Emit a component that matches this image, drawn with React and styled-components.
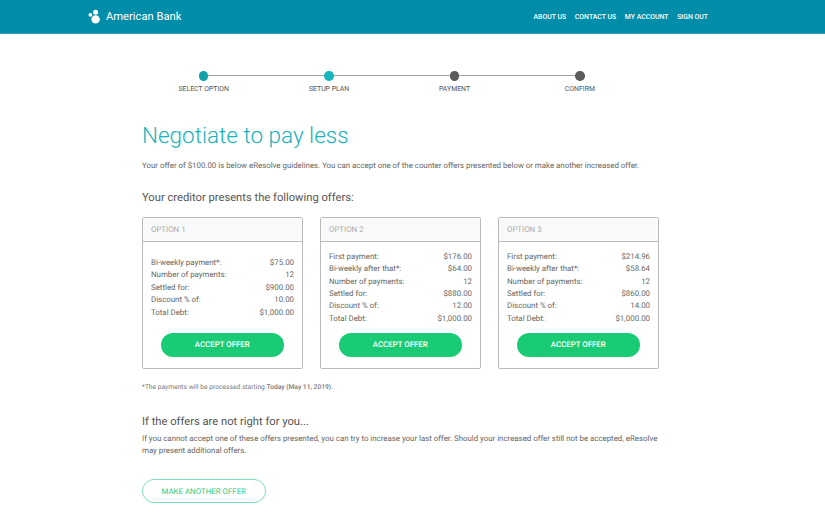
import React from 'react';
import styled, { createGlobalStyle } from 'styled-components';

const Global = createGlobalStyle`
  html, body { margin: 0; padding: 0; background: #fff; }
  body {
    font-family: Roboto, "Liberation Sans", sans-serif; color: #666; overflow: hidden;
    text-rendering: geometricPrecision; -webkit-font-smoothing: antialiased;
  }
`;
const Header = styled.header`
  height: 33px; background: #008da9; border-bottom: 1px solid #2f9fb5;
  display: flex; align-items: center; justify-content: space-between;
  padding: 0 117px 0 88px;
`;
const Brand = styled.div`display: flex; align-items: center; gap: 5px; color: #fff; font-size: 11.2px;`;
const Nav = styled.nav`display: flex; gap: 8.7px;`;
const NavLink = styled.a`color: #fff; font-size: 6.9px; font-weight: 500; white-space: nowrap;`;
const Main = styled.main`width: 517px; margin-left: 142px; display: flex; flex-direction: column;`;
const Stepper = styled.div`
  position: relative; display: grid; grid-template-columns: repeat(4, 125.4px);
  margin: 37px 0 0 -1px;
  width: 501.6px;
`;
const Line = styled.div`position: absolute; top: 4px; left: 62px; width: 377px; height: 1.4px; background: #a0a0a0;`;
const Step = styled.div`display: flex; flex-direction: column; align-items: center; gap: 4px; position: relative;`;
const Dot = styled.span`width: 9.5px; height: 9.5px; border-radius: 50%; background: ${p => p.$c};`;
const StepLabel = styled.span`font-size: 6.9px; color: #555; line-height: 9px; white-space: nowrap;`;
const Title = styled.h1`margin: 27.5px 0 0; font-size: 22.5px; line-height: 30px; font-weight: 300; color: #1ab2ba;`;
const Intro = styled.p`margin: 9px 0 0; font-size: 7.87px; line-height: 12px; color: #666; white-space: nowrap;`;
const Sub = styled.h2`margin: 17.5px 0 0; font-size: 11.2px; line-height: 16px; font-weight: 400; color: #555;`;
const Cards = styled.div`display: flex; gap: 17px; margin-top: 11px;`;
const Card = styled.section`
  width: 161px; height: 152px; box-sizing: border-box; border: 1px solid #bbb; border-radius: 2px;
  display: flex; flex-direction: column;
`;
const CardHead = styled.div`
  height: 24px; flex: none; box-sizing: border-box; background: #f9f9f9; border-bottom: 1px solid #bbb;
  padding: 0 8px; display: flex; align-items: center; font-size: 7.87px; color: #aaa;
`;
const CardBody = styled.div`flex: 1; padding: 2px 8px 0; display: flex; flex-direction: column; justify-content: center;`;
const Row = styled.div`display: flex; justify-content: space-between; font-size: 7.87px; line-height: 12.4px; color: #666;`;
const CardFoot = styled.div`padding: 0 0.5px 11px 0; display: flex; justify-content: center;`;
const Accept = styled.button`
  width: 123.5px; height: 24px; border: none; border-radius: 12px; background: #1acb76; color: #fff;
  font: 500 7.87px Roboto, sans-serif; padding: 0; text-rendering: geometricPrecision;
`;
const Note = styled.p`margin: 13px 0 0; font-size: 6.7px; line-height: 10px; color: #777; b { font-weight: 500; }`;
const Sub2 = styled(Sub)`margin-top: 22px;`;
const Para = styled.p`margin: 3px 0 0; font-size: 7.87px; line-height: 12.4px; color: #666;`;
const Another = styled.button`
  margin-top: 22px; align-self: flex-start; width: 123.5px; height: 24px; background: #fff;
  border: 1px solid #7ce3b2; border-radius: 12px; color: #2bcb80;
  font: 400 7.87px Roboto, sans-serif; padding: 0; text-rendering: geometricPrecision;
`;

const Logo = () => (
  <svg width="13" height="15" viewBox="0 0 13 15" fill="#fff">
    <circle cx="2.4" cy="5.8" r="1.9" />
    <circle cx="7.6" cy="3.2" r="2.5" />
    <circle cx="7.6" cy="10.4" r="4.2" />
  </svg>
);

const steps = [['SELECT OPTION', '#12a3a8'], ['SETUP PLAN', '#19b5bd'], ['PAYMENT', '#5b5b5b'], ['CONFIRM', '#5b5b5b']];
const offers = [
  { name: 'OPTION 1', rows: [['Bi-weekly payment*:', '$75.00'], ['Number of payments:', '12'], ['Settled for:', '$900.00'], ['Discount % of:', '10.00'], ['Total Debt:', '$1,000.00']] },
  { name: 'OPTION 2', rows: [['First payment:', '$176.00'], ['Bi-weekly after that*:', '$64.00'], ['Number of payments:', '12'], ['Settled for:', '$880.00'], ['Discount % of:', '12.00'], ['Total Debt:', '$1,000.00']] },
  { name: 'OPTION 3', rows: [['First payment:', '$214.96'], ['Bi-weekly after that*:', '$58.64'], ['Number of payments:', '12'], ['Settled for:', '$860.00'], ['Discount % of:', '14.00'], ['Total Debt:', '$1,000.00']] },
];

export default function App() {
  return (
    <>
      <Global />
      <Header>
        <Brand><Logo />American Bank</Brand>
        <Nav>
          {['ABOUT US', 'CONTACT US', 'MY ACCOUNT', 'SIGN OUT'].map(n => <NavLink key={n}>{n}</NavLink>)}
        </Nav>
      </Header>
      <Main>
        <Stepper>
          <Line />
          {steps.map(([l, c]) => <Step key={l}><Dot $c={c} /><StepLabel>{l}</StepLabel></Step>)}
        </Stepper>
        <Title>Negotiate to pay less</Title>
        <Intro>Your offer of $100.00 is below eResolve guidelines. You can accept one of the counter offers presented below or make another increased offer.</Intro>
        <Sub>Your creditor presents the following offers:</Sub>
        <Cards>
          {offers.map(o => (
            <Card key={o.name}>
              <CardHead>{o.name}</CardHead>
              <CardBody>
                {o.rows.map(([k, v]) => <Row key={k}><span>{k}</span><span>{v}</span></Row>)}
              </CardBody>
              <CardFoot><Accept>ACCEPT OFFER</Accept></CardFoot>
            </Card>
          ))}
        </Cards>
        <Note>*The payments will be processed starting <b>Today (May 11, 2019)</b>.</Note>
        <Sub2>If the offers are not right for you...</Sub2>
        <Para>If you cannot accept one of these offers presented, you can try to increase your last offer. Should your increased offer still not be accepted, eResolve may present additional offers.</Para>
        <Another>MAKE ANOTHER OFFER</Another>
      </Main>
    </>
  );
}
